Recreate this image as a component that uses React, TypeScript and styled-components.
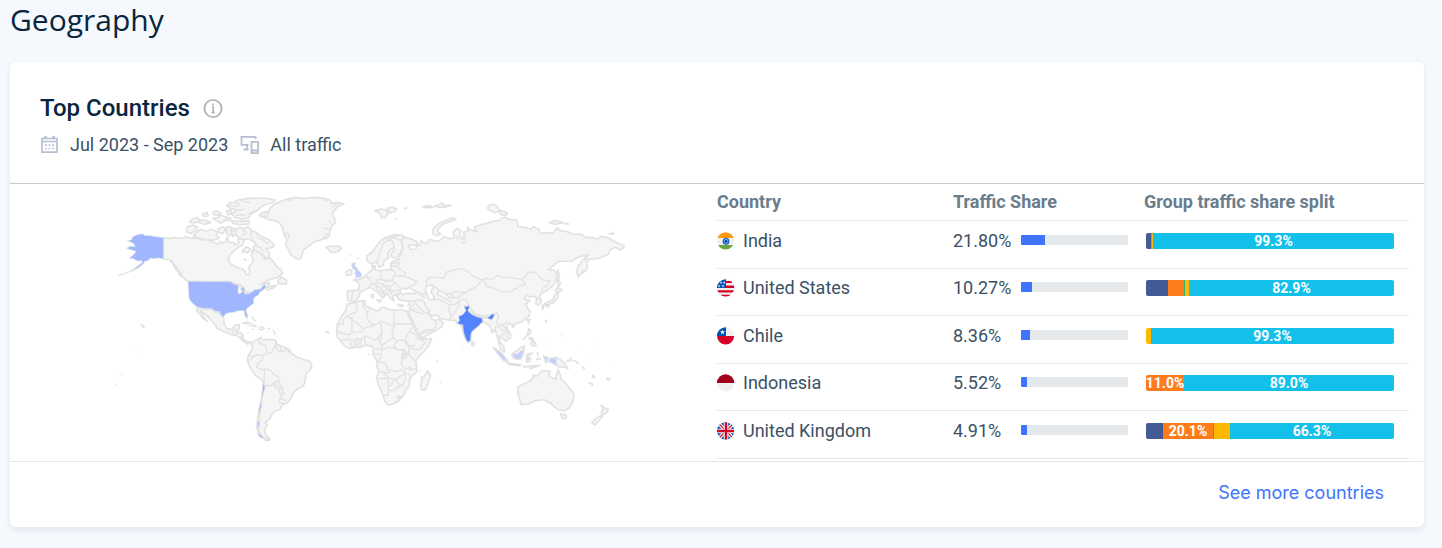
import React from "react";
import styled, { createGlobalStyle } from "styled-components";

const GlobalStyle = createGlobalStyle`
  * { box-sizing: border-box; }
  body {
    margin: 0;
    background: #f5f9fd;
    color: #3a5166;
    font-family: Roboto, "Liberation Sans", sans-serif;
    font-size: 18px;
    line-height: 24px;
  }
`;

const Page = styled.main`
  padding: 0 18px 21px 10px;
`;

const PageTitle = styled.h1`
  margin: 0;
  height: 62px;
  font-family: "Open Sans", sans-serif;
  font-size: 30px;
  font-weight: 400;
  line-height: 40px;
  color: #092540;
`;

const Card = styled.section`
  background: #fff;
  border-radius: 6px;
  box-shadow: 0 3px 6px rgba(14, 30, 62, 0.08);
`;

const CardHeader = styled.header`
  padding: 30px 30px 26px;
  border-bottom: 1px solid #cbcbcb;
`;

const TitleRow = styled.div`
  display: flex;
  align-items: center;
  gap: 13px;
  height: 32px;
`;

const CardTitle = styled.h2`
  margin: 0;
  font-size: 24px;
  font-weight: 500;
  line-height: 32px;
  color: #092540;
`;

const InfoButton = styled.button`
  display: flex;
  padding: 0;
  border: 0;
  background: none;
  color: #b4b4b4;
  cursor: pointer;
`;

const MetaRow = styled.div`
  display: flex;
  align-items: center;
  gap: 12px;
  margin-top: 9px;
`;

const MetaItem = styled.span`
  display: flex;
  align-items: center;
  gap: 10px;
`;

const MetaIcon = styled.svg`
  flex: none;
  color: #b6bfd2;
`;

const CardBody = styled.div`
  display: grid;
  grid-template-columns: minmax(0, 1fr) minmax(0, 1fr);
`;

const MapSvg = styled.svg`
  display: block;
  width: 100%;
  height: 277px;
`;

const TablePane = styled.div`
  padding-right: 15px;
`;

const Table = styled.table`
  width: 100%;
  table-layout: fixed;
  border-collapse: collapse;
`;

const HeadCell = styled.th<{ $width?: number }>`
  width: ${(p) => (p.$width ? `${p.$width}px` : "auto")};
  height: 36px;
  padding: 0;
  border-bottom: 1px solid #e4e7ea;
  color: #6b7c8c;
  font-weight: 700;
  font-size: 18px;
  text-align: left;
  white-space: nowrap;
`;

const Row = styled.tr`
  height: 48px;
  &:nth-child(even) {
    height: 47px;
  }
`;

const Cell = styled.td`
  padding: 0 0 7px;
  border-bottom: 1px solid #e4e7ea;
  white-space: nowrap;
`;

const CountryName = styled.div`
  display: flex;
  align-items: center;
  gap: 8px;
`;

const Share = styled.div`
  display: grid;
  grid-template-columns: 68px 107px;
  align-items: center;
`;

const Track = styled.div`
  height: 10px;
  margin-bottom: 2px;
  border-radius: 1px;
  background: #e5e9ec;
  overflow: hidden;
`;

const Fill = styled.div`
  height: 100%;
  background: #3e74fe;
`;

const SplitBar = styled.div`
  display: flex;
  height: 16px;
  margin: 0 15px 0 2px;
  border-radius: 2px;
  overflow: hidden;
`;

const Segment = styled.div<{ $color: string }>`
  display: flex;
  justify-content: center;
  min-width: 0;
  background: ${(p) => p.$color};
  color: #fff;
  font-size: 14px;
  font-weight: 700;
  line-height: 16px;
`;

const CardFooter = styled.footer`
  display: flex;
  justify-content: flex-end;
  padding: 19px 40px 22px;
  border-top: 1px solid #e4e7ea;
`;

const MoreLink = styled.a`
  color: #3e74fe;
  font-family: Inter, sans-serif;
  font-size: 18px;
  text-decoration: none;
`;

const Land = styled.path`
  fill: #f5f5f5;
  stroke: #e2e2e2;
  stroke-width: 5;
  stroke-linejoin: round;
`;

const Border = styled.path`
  fill: none;
  stroke: #e2e2e2;
  stroke-width: 4;
  stroke-linejoin: round;
`;

const Sea = styled(Land)`
  fill: #fff;
`;

const Shaded = styled(Land)<{ $fill: string }>`
  fill: ${(p) => p.$fill};
  stroke-width: 2;
`;

function WorldMap() {
  return (
    <MapSvg viewBox="0 0 707 277" role="img" aria-label="World map of traffic by country">
      <g transform="translate(100 6) scale(0.33333)">
        {/* North America */}
        <g>
          <Land d="M160 143L175 146 195 142 215 145 228 140 240 145 262 144 275 150 290 148 305 156 325 162 330 154 338 160 346 156 352 140 356 158 370 156 374 164 386 158 384 148 396 146 402 152 398 166 384 172 372 182 360 195 355 208 362 222 378 230 395 236 405 243 408 252 416 256 420 246 415 232 426 220 430 206 424 196 428 180 438 178 450 186 460 196 464 208 478 202 490 215 498 228 512 238 518 250 505 262 490 266 470 272 450 284 464 280 478 278 476 290 466 295 440 306 412 312 398 290 385 285 362 275 237 275 225 268 210 250 195 235 190 222 180 210 160 207Z" />
          <Border d="M188 218L196 226 202 234 208 246 216 256M194 234L204 240M204 250L214 262M220 262L232 272M410 212L400 206M394 190L400 182M430 190L424 186" />
          <Land d="M228 125L233 110 248 105 262 112 256 122 244 130Z" />
          <Land d="M250 138L262 124 274 118 288 124 304 118 322 126 318 134 328 144 312 151 288 149 266 144Z" />
          <Land d="M238 96L250 86 264 82 268 92 252 99ZM262 96L272 90 288 91 302 98 284 103ZM278 72L292 68 294 78 282 80ZM308 66L320 63 334 70 326 76 312 74ZM308 84L322 84 332 76 350 82 346 92 332 99 318 92ZM324 116L338 110 346 118 340 130 328 128ZM350 110L364 112 368 124 358 138 350 130ZM362 120L374 114 378 132 368 140Z" />
          <Land d="M350 48L358 38 372 38 384 30 410 26 440 24 475 26 496 30 488 38 470 42 454 50 442 62 426 70 414 84 394 87 374 82 366 72 380 60 362 56Z" />
          <Border d="M354 46L376 50 388 44M372 38L390 42M382 62L402 58M376 76L396 74 408 78M412 74L428 64 440 62M392 32L420 38" />
          <Land d="M364 92L388 94 416 92 418 102 392 104 370 101ZM350 62L362 60 366 72 354 74ZM350 82L362 84 360 92 350 90Z" />
          <Land d="M376 122L386 112 400 116 414 110 426 122 440 128 456 140 474 148 490 160 492 168 482 174 468 176 478 190 476 206 464 200 448 188 432 180 430 170 440 164 428 152 410 146 396 148 380 138Z" />
          <Border d="M400 116L408 130 396 136M426 124L420 138 430 146M440 130L444 144 458 150M458 142L466 158 478 160M436 168L452 172 460 184" />
          <Land d="M398 180L410 170 422 178 414 188 402 186Z" />
          <Land d="M504 274L514 262 522 266 530 272 529 282 516 282 504 280ZM466 294L480 290 500 286 490 294 474 300Z" />
          <Shaded $fill="#a0b6ff" d="M160 143L160 207 145 204 130 206 122 204 112 213 104 214 100 222 85 233 66 240 80 230 95 220 98 213 80 212 70 206 58 204 72 193 78 184 64 180 50 175 60 169 76 170 70 160 52 152 66 149 66 142 80 135 97 131 104 136 120 137 140 140Z" />
          <Border d="M25 257L44 251 58 245 74 240 88 232" />
          <Shaded $fill="#a0b6ff" d="M179 212L186 212 188 218Z" />
          <Shaded $fill="#a0b6ff" d="M234 278L237 274 362 275 370 282 383 284 386 290 384 302 386 312 394 308 393 294 400 291 404 298 402 310 412 312 425 306 434 299 452 297 458 288 464 282 468 290 462 298 450 306 444 316 434 322 430 330 432 340 420 348 410 356 408 364 413 376 412 386 404 376 402 362 385 362 372 367 358 368 347 371 340 382 332 374 326 364 316 366 304 356 292 356 280 358 262 352 248 340 238 328 236 310Z" />
          <Border d="M383 286L388 282 398 288M390 292L398 306M404 308L418 304" />
        </g>

        {/* Central and South America */}
        <g transform="translate(0 330)">
          <Land d="M260 22L276 26 290 28 304 27 316 36 326 36 332 46 341 52 342 70 350 86 366 88 374 76 388 74 386 88 380 96 392 98 400 104 398 114 406 124 424 126 414 133 402 124 390 114 378 106 364 104 350 98 322 86 312 70 298 54 284 42 272 32 276 44 292 64 280 56 270 42 262 34Z" />
          <Border d="M366 102L372 90 382 88M376 106L386 96M388 114L398 106M402 122L408 120M396 70L412 66 428 72 440 80 424 78 410 70 396 70M446 84L458 80 464 86 452 90 446 84M424 88L432 88M412 98L416 98M472 86L480 86M488 88L492 94 496 106M500 108L502 110M424 50L434 60 438 66M450 72L452 73" />
          <Land d="M424 132L434 122 446 116 452 112 460 120 480 118 496 120 500 132 520 140 536 146 546 162 560 170 580 178 600 184 606 196 600 210 588 222 586 240 580 258 560 268 548 282 544 294 530 310 516 316 510 328 494 334 484 346 480 356 466 366 472 374 464 390 466 402 480 418 456 412 444 396 440 376 446 336 454 296 460 262 460 244 436 226 420 202 412 182 414 168 428 146Z" />
          <Border d="M448 114L446 128 468 138 470 158 460 166 456 182 444 188 440 202 458 210 464 208 462 244 466 258 484 256 494 246 506 244 506 232 490 222 482 212 464 206M470 158L484 160 490 146 496 138 500 124M500 132L498 144 508 156 532 150 540 158M512 140L512 152M526 142L528 150M416 166L430 170 440 164 460 168M414 184L424 178 430 170M494 248L500 258 516 268 522 280 510 284 508 272 494 262 490 248M522 280L510 294 508 308 526 312M510 294L528 302M506 244L510 256 520 264" />
          <Border d="M462 256L456 300 450 334 448 372 446 396 460 412" />
          <Shaded $fill="#9fb4fb" d="M460 242L462 256 465 262 460 280 455 294 457 272ZM455 302L454 322 446 346 447 326ZM448 360L448 374 443 386 443 370ZM444 398L456 408 461 416 448 410ZM462 419L480 420 472 423Z" />
          <Border d="M90 72L98 76 103 82 98 82 96 76M72 139L74 139M92 155L96 157M28 220L32 221M36 222L39 224M17 253L21 253M646 94L654 94 652 99" />
        </g>

        {/* Greenland and Iceland */}
        <g transform="translate(390 0)">
          <Land d="M57 76L68 68 86 64 92 52 104 42 118 36 140 28 166 22 190 26 206 24 230 22 254 25 270 30 276 40 294 38 312 42 296 48 284 60 276 72 284 84 286 98 276 108 270 122 268 138 248 148 222 156 204 170 190 180 186 196 180 208 166 204 152 194 146 180 136 162 142 150 134 138 130 124 126 108 118 98 104 92 84 88 70 82Z" />
          <Border d="M62 78L84 78M132 128L146 134 146 148M250 114L268 118M254 130L268 136M276 100L266 94M278 50L292 44M70 68L88 72M140 28L156 32M246 28L262 34M262 148L248 140" />
          <Land d="M257 171L270 168 286 170 296 168 304 176 292 186 272 187 266 178Z" />
        </g>

        {/* Europe and Asia */}
        <g transform="translate(630 0)">
          <Land d="M165 62L182 57 200 60 204 70 194 84 184 82 180 70ZM202 54L220 52 230 58 222 66 208 68ZM252 56L262 54M224 86L230 86M308 50L330 47 340 52 322 53ZM344 48L362 42 366 38 370 46 394 46 372 52 356 52Z" />
          <Land d="M338 130L340 116 354 102 374 92 400 84 408 88 390 95 370 102 358 112 352 124 362 132 350 137Z" />
          <Land d="M502 54L512 44 526 44 534 54 540 62 524 68 508 60ZM538 66L546 62 562 70 558 76 542 74ZM688 98L700 92 718 94 728 98 706 103ZM730 100L748 102M868 132L878 128 882 132Z" />
          <Land d="M245 136L258 143 276 148 291 155 292 164 278 166 264 166 272 178 288 177 290 168 300 164 303 152 312 160 322 158 330 148 342 152 356 154 372 140 390 146 402 144 400 126 410 115 422 122 418 134 426 150 434 140 430 126 444 124 442 112 452 120 466 124 462 112 482 104 500 100 520 94 538 92 542 86 554 82 568 88 590 90 595 110 615 112 630 118 640 110 655 116 662 130 700 128 710 114 724 122 744 126 760 132 785 133 795 142 820 143 835 148 840 140 858 141 872 148 885 155 900 162 914 168 902 180 885 172 870 180 865 193 840 204 808 208 800 218 802 232 796 244 784 250 775 261 770 246 774 230 786 212 806 194 796 198 785 198 770 204 755 213 715 214 700 226 685 238 704 242 710 256 708 270 700 286 680 302 668 308 658 318 664 336 656 346 648 342 650 326 642 318 630 322 620 316 612 326 630 332 618 342 622 352 630 366 626 380 608 394 592 400 576 404 568 400 560 408 562 418 572 430 572 444 556 454 550 446 538 438 542 458 552 470 554 486 544 480 537 462 532 440 526 420 516 428 510 410 502 402 490 396 475 405 455 425 452 445 445 458 435 445 428 420 422 402 412 402 406 391 385 390 362 386 350 375 336 378 322 365 332 382 346 392 356 388 370 398 364 412 342 424 304 446 298 435 286 408 272 382 266 368 270 352 268 334 252 332 236 328 230 318 240 310 222 316 218 320 222 332 212 326 204 314 192 308 178 292 166 286 174 300 196 316 188 324 176 310 152 292 134 300 120 306 118 318 106 334 88 334 82 328 82 302 112 302 118 288 114 276 100 270 120 268 136 258 148 246 158 238 156 226 166 228 166 240 180 242 214 238 212 220 222 212 236 208 244 190 248 176 244 152Z" />
          <Land d="M140 198L156 186 168 170 182 152 196 142 224 134 246 136 252 146 244 152 248 175 240 192 228 204 216 202 212 192 222 182 222 172 208 182 204 192 206 204 192 212 190 226 178 232 170 216 156 222 142 214Z" />
          <Border d="M170 216L176 202 178 186 186 172 188 162 200 152 214 150 220 158 222 172M200 152L206 144 222 142 232 148 246 150M214 150L212 146M186 152L200 142M206 144L240 136" />
          <Border d="M212 220L236 218M210 230L232 228M214 238L226 248 220 262 216 272 190 270 182 262 184 244M236 208L238 220 232 232 244 240 256 250 252 258 222 258M252 258L272 266 290 274 284 284 268 290M172 268L186 270 200 276 214 272 228 280 238 292M150 260L150 272 158 282 174 280 190 282 204 290 216 286 228 280M136 258L150 268M118 288L116 302M98 304L96 318 94 334M186 288L200 294 208 304 222 302 240 300M212 288L210 304 216 314M158 282L146 290 150 294M190 282L186 292M164 236L160 228M168 270L174 278M204 292L196 304" />
          <Border d="M268 334L284 332 302 330 312 334 316 348 330 362 324 368M300 314L310 320 318 324M284 332L288 342 298 354 312 366 322 370M272 352L286 340M270 352L276 360 288 356M302 312L290 308M286 304L306 312 324 312M304 446L300 430 320 418 340 420 350 406 344 394M306 430L340 420M276 362L310 372" />
          <Border d="M320 272L330 262 356 262 372 264 380 246 404 240 424 236 446 246 456 256 474 266 484 270 476 282 470 290 452 298 440 306 424 308 406 304 396 312 378 310 356 300 344 290M320 272L318 284M340 326L352 328 372 334 388 346 408 342 420 330 436 326 440 332M356 300L352 314 368 322 388 332 394 340M388 346L386 360 396 384M408 342L414 334 420 344 408 362 396 376 386 390M396 312L402 322 414 324 422 316 440 306M376 310L392 326 402 322M440 332L448 346 456 360 466 372 486 378 500 376 518 374 530 368M484 270L500 266 516 268 524 262 534 256 548 262 572 262 590 266 606 268 620 256 622 248 640 246 654 252 660 264 680 274 690 270M484 270L496 278 500 290 520 294 540 304 566 306 588 296 598 286 618 284 604 268M484 270L500 264M690 270L686 280 676 290 668 294 664 306M530 368L536 380 530 396 536 408 546 404 556 400 562 396M524 420L530 406M536 408L544 420 558 422 562 418M546 404L560 418 566 430M546 438L552 428 564 430 560 444M486 378L488 384 508 384M450 362L470 378 486 380M648 326L660 324" />
          <Sea d="M318 290L332 284 344 290 336 298 334 308 342 318 340 330 328 328 322 314 316 302ZM240 304L246 294 258 298 268 292 278 300 288 304 286 311 262 310 246 314Z" />
          <Land d="M714 240L718 256 716 270 722 280 714 292 712 276 710 256ZM712 292L726 300 716 308 706 304ZM714 310L712 326 700 338 686 342 672 348 668 358 666 348 682 336 698 330 706 312ZM678 346L688 344 684 352ZM680 390L676 398" />
          <Border d="M786 250L790 240M792 212L802 204M408 138L414 150M424 160L438 156M426 136L438 150M472 126L468 116M710 116L716 122" />
          <Land d="M78 246L90 238 96 244 94 254 80 257ZM152 316L160 312 160 324 154 322ZM170 330L184 330 180 336ZM234 344L250 346 246 350ZM262 346L268 343M90 194L93 196M112 206L117 204" />
          <Shaded $fill="#c3cfff" d="M94 220L108 218 104 226 112 236 120 246 126 252 122 262 104 264 110 256 102 252 108 244 98 236Z" />
        </g>

        {/* Africa, the Middle East and India */}
        <g transform="translate(630 300)">
          <Land d="M82 42L96 40 112 34 134 32 136 46 152 54 168 62 178 62 180 54 192 52 206 58 228 60 246 60 262 64 264 76 272 90 280 106 286 122 292 134 302 148 334 146 326 168 310 186 296 200 287 214 290 230 290 246 276 258 268 270 268 286 258 300 250 316 234 334 220 342 204 345 196 336 188 314 180 296 172 274 170 262 176 244 170 226 172 214 160 196 158 186 162 176 152 168 138 166 122 172 104 172 88 176 74 168 62 154 52 142 50 128 52 104 64 80 78 60Z" />
          <Border d="M52 104L70 102 70 88 84 76 112 64 108 38M84 76L84 80 132 116 126 124 94 128 90 134 72 132 60 126 50 128M84 80L96 82 96 128M132 32L128 50 138 58 144 90 160 106 178 98 182 92 222 110 222 60M132 116L160 106M182 98L186 126 174 146 162 150 140 138 134 140 130 148 108 146 108 172M222 102L276 102M222 110L216 130 218 142 232 152 254 150 270 120 278 110M174 146L186 166 204 154 218 144M186 166L184 176 166 178M270 124L286 134 304 150 316 158 296 180 268 174 254 152M268 174L266 194 288 214M266 194L250 178 234 180 218 174 202 172 186 180M186 180L184 200 172 216 194 218 204 238 208 248 190 248 176 244M250 178L246 204 244 224 256 238 270 232 270 240 288 236M172 266L212 266 226 268 240 260 256 250 244 238 228 246 208 238M190 248L208 266M204 300L204 270M190 316L204 316 206 300 220 302 236 290 248 286 256 270 256 252M228 268L238 284 248 288M226 268L208 290M264 250L272 260M122 172L124 150M116 148L116 172M134 140L136 166M88 150L100 150 106 170M70 152L90 146M62 148L76 150M98 172L90 158M158 190L180 192M232 152L222 168 234 180M246 190L258 188 260 200 248 206M284 146L296 148M150 54L140 70M184 126L184 150M256 150L266 166 284 168" />
          <Land d="M236 318L244 322 238 328 232 322ZM252 308L256 312M246 196L254 192 258 202 250 204Z" />
          <Land d="M323 243L332 256 324 280 316 300 306 300 302 288 306 270 304 262 314 258ZM454 152L462 160 462 166 456 166ZM16 126L24 126 26 132M146 192L150 194M350 212L354 214M360 278L362 280M300 242L302 244M426 170L428 172" />
          <Shaded $fill="#5582ff" d="M432 46L438 50 446 46 448 54 444 62 454 72 470 80 486 84 489 96 482 100 476 108 466 116 456 124 452 136 452 150 446 157 440 152 434 138 430 124 428 104 420 104 412 98 418 92 416 78 428 74 438 62 434 54Z" />
          <Shaded $fill="#5582ff" d="M500 80L508 80 514 73 524 71 521 81 515 90 508 87Z" />
        </g>

        {/* South-east Asia and Oceania */}
        <g transform="translate(1110 330)">
          <Land d="M113 262L126 254 144 246 156 238 160 226 172 228 184 214 196 212 210 215 206 228 218 234 228 238 230 222 234 208 240 222 244 238 258 250 266 262 278 274 282 290 278 306 268 324 252 332 236 330 222 320 214 312 214 306 206 308 196 300 182 300 160 304 144 312 124 314 120 300 114 280Z" />
          <Land d="M242 342L258 344 260 352 250 357ZM364 316L374 324 386 328 380 338 368 344 364 336 370 330ZM362 346L368 350 352 366 346 374 336 370 344 358Z" />
          <Land d="M228 172L246 182 254 190 264 206 252 200 240 202 228 194ZM258 184L270 182 272 172M274 180L286 184 298 192M306 198L314 208M338 224L344 232 338 232 338 224M326 248L336 252 338 258M380 236L390 234 386 242Z" />
          <Land d="M146 86L152 92 150 102 142 106 144 94ZM148 112L160 116 158 124 150 118ZM152 130L164 126 168 138 156 138ZM142 60L150 58 146 70ZM96 78L102 76 98 84ZM140 106L130 120M172 156L174 170M184 176L168 178M122 142L134 138 130 146Z" />
          <Land d="M96 162L108 154 124 142 134 144 130 160 124 176 110 178 98 172ZM140 164L152 160 158 160 144 168 152 176 150 184 140 186ZM40 142L52 150 68 162 84 184 72 182 58 166ZM80 188L100 192 122 194 120 198 88 194ZM128 200L148 200 170 196M150 206L160 202 180 196ZM190 168L200 172 212 176 228 172 228 196 216 188 202 182 198 190 194 176Z" />
          <Shaded $fill="#c3cfff" d="M98 162L112 162 126 150 132 154 126 166 122 176 104 176ZM42 144L54 152 68 164 82 184 72 182 58 166ZM142 170L150 176 142 180ZM190 168L202 172 202 184 196 178ZM208 176L228 174 228 196 216 188 208 184ZM86 190L120 194 120 197 88 193Z" />
          <Border d="M202 132L203 134M244 108L246 106M248 100L250 99M300 135L302 136M354 133L356 134M336 166L338 167M388 198L390 199M124 116L125 118" />
        </g>
      </g>
    </MapSvg>
  );
}

type FlagCode = "in" | "us" | "cl" | "id" | "gb";

const flagArt: Record<FlagCode, React.ReactNode> = {
  in: (
    <>
      <path fill="#f0f0f0" d="M0 0h18v18H0z" />
      <path fill="#ff9811" d="M0 0h18v6H0z" />
      <path fill="#6da544" d="M0 13h18v5H0z" />
      <circle cx="9" cy="9.400" r="3.300" fill="#0052b4" />
      <circle cx="9" cy="9.400" r="2.300" fill="#a9c3e3" />
      <circle cx="9" cy="9.400" r="1.600" fill="#0052b4" />
    </>
  ),
  us: (
    <>
      <path fill="#f0f0f0" d="M0 0h18v18H0z" />
      <path fill="#d80027" d="M9 2h9v2H9zM9 6.500h9v2.500H9zM0 11.200h18v2.400H0zM2 15.800h14V18H2z" />
      <path fill="#0052b4" d="M0 0h9v9H0z" />
      <path fill="#c5d5ea" d="M4 2l.5 1 1 .1-.8.7.2 1-.9-.5-.9.5.2-1-.8-.7 1-.1zM7.200 2l.5 1 1 .1-.8.7.2 1-.9-.5-.9.5.2-1-.8-.7 1-.1zM2 5.500l.5 1 1 .1-.8.7.2 1-.9-.5-.9.5.2-1-.8-.7 1-.1zM6 5.500l.5 1 1 .1-.8.7.2 1-.9-.5-.9.5.2-1-.8-.7 1-.1z" />
    </>
  ),
  cl: (
    <>
      <path fill="#f0f0f0" d="M0 0h18v9H0z" />
      <path fill="#d80027" d="M0 9h18v9H0z" />
      <path fill="#0052b4" d="M0 0h9v9H0z" />
      <path fill="#f0f0f0" d="M5.500 2.500l.7 1.700 1.800.1-1.400 1.100.5 1.800-1.600-1-1.600 1 .5-1.800L3 4.300l1.800-.1z" />
    </>
  ),
  id: (
    <>
      <path fill="#f0f0f0" d="M0 9h18v9H0z" />
      <path fill="#a2001d" d="M0 0h18v9H0z" />
    </>
  ),
  gb: (
    <>
      <path fill="#0052b4" d="M0 0h18v18H0z" />
      <path stroke="#f0f0f0" strokeWidth="3.600" d="M0 0l18 18M18 0L0 18" />
      <path stroke="#d80027" strokeWidth="1.200" d="M0 0l18 18M18 0L0 18" />
      <path stroke="#f0f0f0" strokeWidth="4.600" d="M9 0v18M0 9h18" />
      <path stroke="#d80027" strokeWidth="2.400" d="M9 0v18M0 9h18" />
    </>
  ),
};

function Flag({ code }: { code: FlagCode }) {
  return (
    <svg width="18" height="18" viewBox="0 0 18 18" aria-hidden="true">
      <clipPath id={`flag-${code}`}>
        <circle cx="8.600" cy="8.800" r="8.600" />
      </clipPath>
      <g clipPath={`url(#flag-${code})`}>{flagArt[code]}</g>
    </svg>
  );
}

const NAVY = "#435a94";
const ORANGE = "#ff7c1c";
const GREEN = "#2bb673";
const YELLOW = "#ffb800";
const CYAN = "#12c0ea";

interface Part {
  color: string;
  size: number;
  label?: string;
}

interface CountryRow {
  code: FlagCode;
  name: string;
  share: string;
  fill: number;
  parts: Part[];
}

const rows: CountryRow[] = [
  {
    code: "in", name: "India", share: "21.80%", fill: 22.5,
    parts: [{ color: NAVY, size: 5 }, { color: ORANGE, size: 1 }, { color: YELLOW, size: 1 }, { color: CYAN, size: 241, label: "99.3%" }],
  },
  {
    code: "us", name: "United States", share: "10.27%", fill: 10.3,
    parts: [{ color: NAVY, size: 22 }, { color: ORANGE, size: 16 }, { color: GREEN, size: 1 }, { color: YELLOW, size: 4 }, { color: CYAN, size: 205, label: "82.9%" }],
  },
  {
    code: "cl", name: "Chile", share: "8.36%", fill: 8.4,
    parts: [{ color: YELLOW, size: 5 }, { color: CYAN, size: 243, label: "99.3%" }],
  },
  {
    code: "id", name: "Indonesia", share: "5.52%", fill: 5.6,
    parts: [{ color: ORANGE, size: 38, label: "11.0%" }, { color: CYAN, size: 210, label: "89.0%" }],
  },
  {
    code: "gb", name: "United Kingdom", share: "4.91%", fill: 5.6,
    parts: [{ color: NAVY, size: 17 }, { color: ORANGE, size: 50, label: "20.1%" }, { color: GREEN, size: 1 }, { color: YELLOW, size: 16 }, { color: CYAN, size: 164, label: "66.3%" }],
  },
];

export default function App() {
  return (
    <>
      <GlobalStyle />
      <Page>
        <PageTitle>Geography</PageTitle>
        <Card>
          <CardHeader>
            <TitleRow>
              <CardTitle>Top Countries</CardTitle>
              <InfoButton type="button" aria-label="About top countries">
                <svg width="20" height="20" viewBox="0 0 20 20" fill="none" stroke="currentColor" strokeWidth="1.800">
                  <circle cx="10" cy="10.500" r="8.600" />
                  <path d="M8.800 9H10.200V14.500M8.500 14.500H12" strokeWidth="1.600" />
                  <circle cx="10" cy="6.500" r="1.100" fill="currentColor" stroke="none" />
                </svg>
              </InfoButton>
            </TitleRow>
            <MetaRow>
              <MetaItem>
                <MetaIcon width="20" height="20" viewBox="0 0 20 20" fill="none" stroke="currentColor" strokeWidth="1.700">
                  <path d="M2 3.500H17V17.200H2ZM2 6.500H17" />
                  <path d="M4 2.200H7M12 2.200H15" strokeWidth="2" />
                  <path d="M5 10.200H14M5 13.500H14" strokeWidth="1.700" strokeDasharray="1.800 1.800" />
                </MetaIcon>
                Jul 2023 - Sep 2023
              </MetaItem>
              <MetaItem>
                <MetaIcon width="20" height="20" viewBox="0 0 20 20" fill="none" stroke="currentColor" strokeWidth="1.800">
                  <path d="M15.500 4V1.800H1.500V9.800H8.500M7.200 9.800V14.500M3.500 14.500H8.500" />
                  <path d="M11.500 6.800H18V18.200H11.500ZM11.500 15.500H18" />
                </MetaIcon>
                All traffic
              </MetaItem>
            </MetaRow>
          </CardHeader>
          <CardBody>
            <WorldMap />
            <TablePane>
              <Table>
                <thead>
                  <tr>
                    <HeadCell $width={236} scope="col">Country</HeadCell>
                    <HeadCell $width={191} scope="col">Traffic Share</HeadCell>
                    <HeadCell scope="col">Group traffic share split</HeadCell>
                  </tr>
                </thead>
                <tbody>
                  {rows.map((row) => (
                    <Row key={row.code}>
                      <Cell>
                        <CountryName>
                          <Flag code={row.code} />
                          {row.name}
                        </CountryName>
                      </Cell>
                      <Cell>
                        <Share>
                          {row.share}
                          <Track>
                            <Fill style={{ width: `${row.fill}%` }} />
                          </Track>
                        </Share>
                      </Cell>
                      <Cell>
                        <SplitBar>
                          {row.parts.map((part, i) => (
                            <Segment key={i} $color={part.color} style={{ flex: `${part.size} 1 0` }}>
                              {part.label}
                            </Segment>
                          ))}
                        </SplitBar>
                      </Cell>
                    </Row>
                  ))}
                </tbody>
              </Table>
            </TablePane>
          </CardBody>
          <CardFooter>
            <MoreLink href="#countries">See more countries</MoreLink>
          </CardFooter>
        </Card>
      </Page>
    </>
  );
}
